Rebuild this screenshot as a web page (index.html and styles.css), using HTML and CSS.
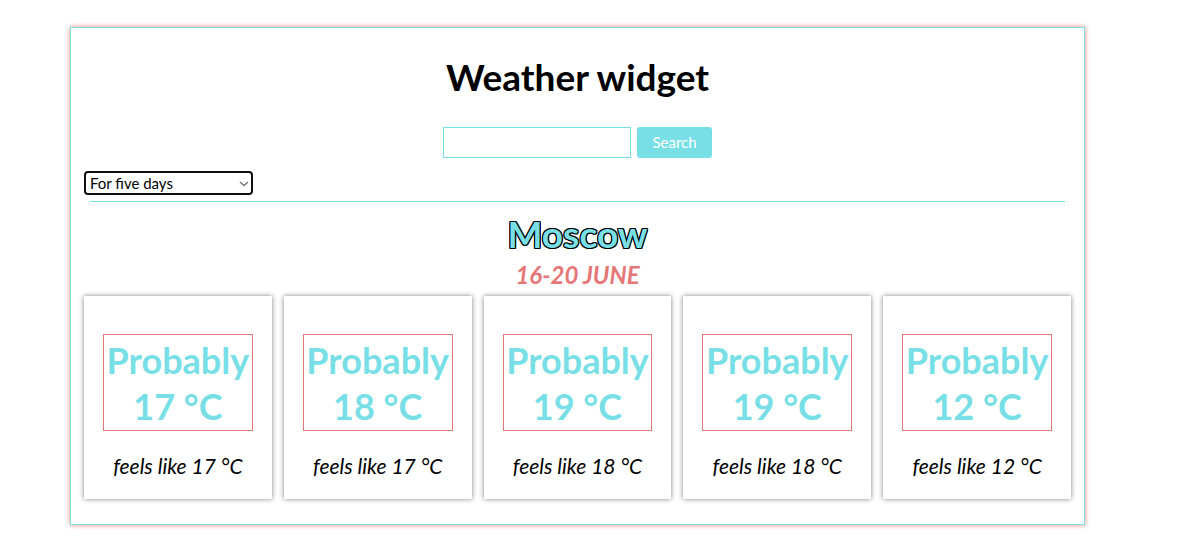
FILE: index.html
```html
<!DOCTYPE html>
<html lang="en">
<head>
<meta charset="utf-8">
<title>Weather widget</title>
<link rel="stylesheet" href="styles.css">
</head>
<body>
<main class="widget">
  <h1 class="title">Weather widget</h1>
  <form class="search">
    <input class="search-input" type="text" aria-label="City">
    <button class="search-button" type="button">Search</button>
  </form>
  <div class="period">
    <select class="period-select" aria-label="Forecast period">
      <option>For five days</option>
    </select>
    <svg class="period-arrow" viewBox="0 0 10 6" aria-hidden="true"><path d="M1 1l4 3.5 4-3.5"/></svg>
  </div>
  <hr class="divider">
  <h2 class="city">Moscow</h2>
  <p class="dates">16-20 JUNE</p>
  <section class="days">
    <article class="card"><p class="temp">Probably 17 °C</p><p class="feels">feels like 17 °C</p></article>
    <article class="card"><p class="temp">Probably 18 °C</p><p class="feels">feels like 17 °C</p></article>
    <article class="card"><p class="temp">Probably 19 °C</p><p class="feels">feels like 18 °C</p></article>
    <article class="card"><p class="temp">Probably 19 °C</p><p class="feels">feels like 18 °C</p></article>
    <article class="card"><p class="temp">Probably 12 °C</p><p class="feels">feels like 12 °C</p></article>
  </section>
</main>
</body>
</html>
```

FILE: styles.css
```css
* {
  box-sizing: border-box;
}

body {
  margin: 0;
  padding: 27px 100px 18px 70px;
  background: #fff;
  color: #000;
  font-family: Lato, sans-serif;
}

.widget {
  padding: 25px 13px 25px 13px;
  border: 1px solid #79dfe6;
  box-shadow: 0 0 5px #fa8072;
}

.title {
  margin: 0;
  font-size: 37px;
  line-height: 48px;
  text-align: center;
}

.search {
  display: flex;
  justify-content: center;
  gap: 6px;
  margin-top: 26px;
}

.search-input {
  width: 188px;
  height: 31px;
  padding: 4px 8px;
  border: 1px solid #79dfe6;
  background: #fff;
  font: inherit;
}

.search-button {
  width: 75px;
  height: 31px;
  padding: 0 0 2px;
  border: 0;
  border-radius: 3px;
  background: #79dfe6;
  color: #fff;
  font-family: inherit;
  font-size: 15px;
}

.period {
  position: relative;
  width: 169px;
  margin-top: 13px;
}

.period-select {
  display: block;
  width: 100%;
  height: 24px;
  padding: 0 20px 0 4px;
  border: 2px solid #101010;
  border-radius: 4px;
  background: #fff;
  color: #000;
  font-family: inherit;
  font-size: 15px;
  appearance: none;
}

.period-arrow {
  position: absolute;
  top: 10px;
  right: 4px;
  width: 10px;
  height: 6px;
  fill: none;
  stroke: #767676;
  stroke-width: 1.5;
  pointer-events: none;
}

.divider {
  height: 1px;
  margin: 6px 6px 0;
  border: 0;
  background: #79dfe6;
}

.city {
  margin: 9px 0 0;
  color: #79dfe6;
  font-size: 37px;
  line-height: 46px;
  text-align: center;
  text-shadow: 1px 0 #000, -1px 0 #000, 0 1px #000, 0 -1px #000, 1px 1px #000, -1px -1px #000, 1px -1px #000, -1px 1px #000;
}

.dates {
  margin: 0 0 3px;
  color: #e57777;
  font-size: 24px;
  font-style: italic;
  font-weight: 700;
  line-height: 36px;
  text-align: center;
}

.days {
  display: grid;
  grid-template-columns: repeat(5, 1fr);
  gap: 12px;
}

.card {
  padding: 38px 19px 19px;
  box-shadow: 0 0 5px #808080;
  text-align: center;
}

.temp {
  margin: 0;
  padding: 2px 0 1px;
  border: 1px solid #e57777;
  color: #79dfe6;
  font-size: 36px;
  font-weight: 700;
  line-height: 46px;
}

.feels {
  margin: 21px 0 0;
  font-size: 21px;
  font-style: italic;
  line-height: 28px;
}
```
